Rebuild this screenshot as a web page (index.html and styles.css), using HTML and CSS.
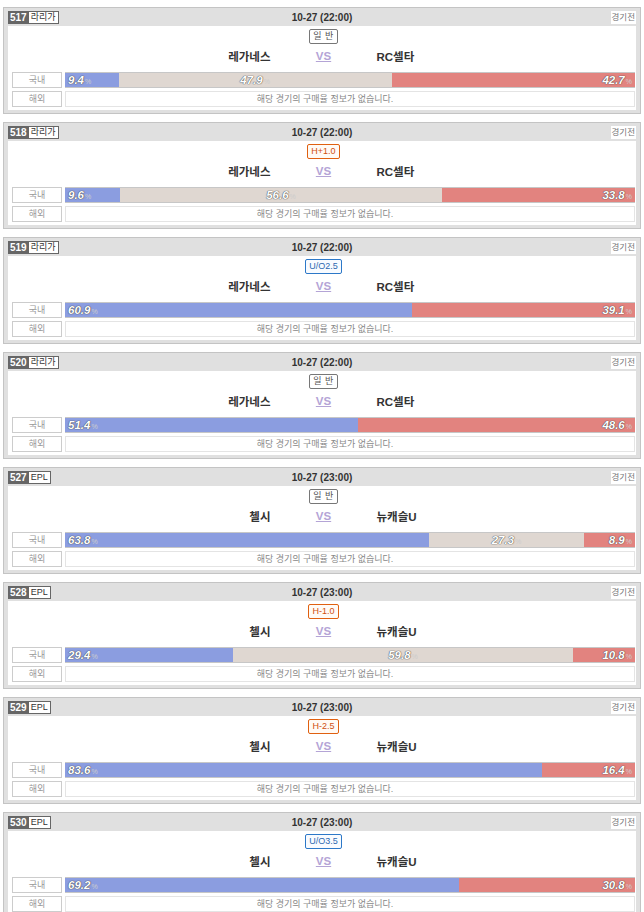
FILE: index.html
```html
<!DOCTYPE html>
<html>
  <head>
    <link rel="stylesheet" href="styles.css">
  </head>
  <body>
    <div class="game">
      <div class="game-head">
        <span class="league"><b>517</b>라리가</span>
        <span class="game-time">10-27 (22:00)</span>
        <span class="game-state">경기전</span>
      </div>
      <div class="game-body">
        <div class="bet-type"><span class="type normal">일 반</span></div>
        <div class="teams"><span class="home">레가네스</span><a class="vs">VS</a><span class="away">RC셀타</span></div>
        <div class="rate-row">
          <span class="rate-label">국내</span>
          <div class="rate-bar">
            <div class="seg win" style="width: 9.4%">9.4<small>%</small></div>
            <div class="seg draw" style="width: 47.9%">47.9<small>%</small></div>
            <div class="seg lose">42.7<small>%</small></div>
          </div>
        </div>
        <div class="rate-row">
          <span class="rate-label">해외</span>
          <div class="rate-empty">해당 경기의 구매율 정보가 없습니다.</div>
        </div>
      </div>
    </div>

    <div class="game">
      <div class="game-head">
        <span class="league"><b>518</b>라리가</span>
        <span class="game-time">10-27 (22:00)</span>
        <span class="game-state">경기전</span>
      </div>
      <div class="game-body">
        <div class="bet-type"><span class="type handi">H+1.0</span></div>
        <div class="teams"><span class="home">레가네스</span><a class="vs">VS</a><span class="away">RC셀타</span></div>
        <div class="rate-row">
          <span class="rate-label">국내</span>
          <div class="rate-bar">
            <div class="seg win" style="width: 9.6%">9.6<small>%</small></div>
            <div class="seg draw" style="width: 56.6%">56.6<small>%</small></div>
            <div class="seg lose">33.8<small>%</small></div>
          </div>
        </div>
        <div class="rate-row">
          <span class="rate-label">해외</span>
          <div class="rate-empty">해당 경기의 구매율 정보가 없습니다.</div>
        </div>
      </div>
    </div>

    <div class="game">
      <div class="game-head">
        <span class="league"><b>519</b>라리가</span>
        <span class="game-time">10-27 (22:00)</span>
        <span class="game-state">경기전</span>
      </div>
      <div class="game-body">
        <div class="bet-type"><span class="type over">U/O2.5</span></div>
        <div class="teams"><span class="home">레가네스</span><a class="vs">VS</a><span class="away">RC셀타</span></div>
        <div class="rate-row">
          <span class="rate-label">국내</span>
          <div class="rate-bar">
            <div class="seg win" style="width: 60.9%">60.9<small>%</small></div>
            <div class="seg lose">39.1<small>%</small></div>
          </div>
        </div>
        <div class="rate-row">
          <span class="rate-label">해외</span>
          <div class="rate-empty">해당 경기의 구매율 정보가 없습니다.</div>
        </div>
      </div>
    </div>

    <div class="game">
      <div class="game-head">
        <span class="league"><b>520</b>라리가</span>
        <span class="game-time">10-27 (22:00)</span>
        <span class="game-state">경기전</span>
      </div>
      <div class="game-body">
        <div class="bet-type"><span class="type normal">일 반</span></div>
        <div class="teams"><span class="home">레가네스</span><a class="vs">VS</a><span class="away">RC셀타</span></div>
        <div class="rate-row">
          <span class="rate-label">국내</span>
          <div class="rate-bar">
            <div class="seg win" style="width: 51.4%">51.4<small>%</small></div>
            <div class="seg lose">48.6<small>%</small></div>
          </div>
        </div>
        <div class="rate-row">
          <span class="rate-label">해외</span>
          <div class="rate-empty">해당 경기의 구매율 정보가 없습니다.</div>
        </div>
      </div>
    </div>

    <div class="game">
      <div class="game-head">
        <span class="league"><b>527</b>EPL</span>
        <span class="game-time">10-27 (23:00)</span>
        <span class="game-state">경기전</span>
      </div>
      <div class="game-body">
        <div class="bet-type"><span class="type normal">일 반</span></div>
        <div class="teams"><span class="home">첼시</span><a class="vs">VS</a><span class="away">뉴캐슬U</span></div>
        <div class="rate-row">
          <span class="rate-label">국내</span>
          <div class="rate-bar">
            <div class="seg win" style="width: 63.8%">63.8<small>%</small></div>
            <div class="seg draw" style="width: 27.3%">27.3<small>%</small></div>
            <div class="seg lose">8.9<small>%</small></div>
          </div>
        </div>
        <div class="rate-row">
          <span class="rate-label">해외</span>
          <div class="rate-empty">해당 경기의 구매율 정보가 없습니다.</div>
        </div>
      </div>
    </div>

    <div class="game">
      <div class="game-head">
        <span class="league"><b>528</b>EPL</span>
        <span class="game-time">10-27 (23:00)</span>
        <span class="game-state">경기전</span>
      </div>
      <div class="game-body">
        <div class="bet-type"><span class="type handi">H-1.0</span></div>
        <div class="teams"><span class="home">첼시</span><a class="vs">VS</a><span class="away">뉴캐슬U</span></div>
        <div class="rate-row">
          <span class="rate-label">국내</span>
          <div class="rate-bar">
            <div class="seg win" style="width: 29.4%">29.4<small>%</small></div>
            <div class="seg draw" style="width: 59.8%">59.8<small>%</small></div>
            <div class="seg lose">10.8<small>%</small></div>
          </div>
        </div>
        <div class="rate-row">
          <span class="rate-label">해외</span>
          <div class="rate-empty">해당 경기의 구매율 정보가 없습니다.</div>
        </div>
      </div>
    </div>

    <div class="game">
      <div class="game-head">
        <span class="league"><b>529</b>EPL</span>
        <span class="game-time">10-27 (23:00)</span>
        <span class="game-state">경기전</span>
      </div>
      <div class="game-body">
        <div class="bet-type"><span class="type handi">H-2.5</span></div>
        <div class="teams"><span class="home">첼시</span><a class="vs">VS</a><span class="away">뉴캐슬U</span></div>
        <div class="rate-row">
          <span class="rate-label">국내</span>
          <div class="rate-bar">
            <div class="seg win" style="width: 83.6%">83.6<small>%</small></div>
            <div class="seg lose">16.4<small>%</small></div>
          </div>
        </div>
        <div class="rate-row">
          <span class="rate-label">해외</span>
          <div class="rate-empty">해당 경기의 구매율 정보가 없습니다.</div>
        </div>
      </div>
    </div>

    <div class="game">
      <div class="game-head">
        <span class="league"><b>530</b>EPL</span>
        <span class="game-time">10-27 (23:00)</span>
        <span class="game-state">경기전</span>
      </div>
      <div class="game-body">
        <div class="bet-type"><span class="type over">U/O3.5</span></div>
        <div class="teams"><span class="home">첼시</span><a class="vs">VS</a><span class="away">뉴캐슬U</span></div>
        <div class="rate-row">
          <span class="rate-label">국내</span>
          <div class="rate-bar">
            <div class="seg win" style="width: 69.2%">69.2<small>%</small></div>
            <div class="seg lose">30.8<small>%</small></div>
          </div>
        </div>
        <div class="rate-row">
          <span class="rate-label">해외</span>
          <div class="rate-empty">해당 경기의 구매율 정보가 없습니다.</div>
        </div>
      </div>
    </div>
  </body>
</html>
```

FILE: styles.css
```css
body {
  margin: 0;
  padding: 7px 3px 0;
  background: #ffffff;
  font-family: "Liberation Sans", "Noto Sans CJK KR", sans-serif;
  font-size: 10px;
  color: #333333;
}

.game {
  border: 1px solid #c4c4c4;
  background-color: #e0e0e0;
  padding: 0 4px 3px;
  margin-bottom: 8px;
}

.game-head {
  height: 18px;
  display: grid;
  grid-template-columns: 1fr auto 1fr;
  align-items: center;
}

.league {
  justify-self: start;
  display: flex;
  height: 13px;
  margin-top: 1px;
  border: 1px solid #666666;
  box-sizing: border-box;
  background: #ffffff;
  line-height: 11px;
  font-size: 9px;
  color: #333333;
  padding-right: 2px;
}

.league b {
  background: #666666;
  color: #ffffff;
  font-size: 10px;
  padding: 0 2px 0 1px;
  margin-right: 2px;
}

.game-time {
  font-weight: bold;
  font-size: 10px;
  color: #333333;
  padding-top: 1px;
}

.game-state {
  justify-self: end;
  margin-top: 1px;
  height: 13px;
  line-height: 13px;
  padding: 0 1px;
  background: #ffffff;
  color: #777777;
  font-size: 8.5px;
}

.game-body {
  background: #ffffff;
  padding: 3px 1px 3px 4px;
}

.bet-type {
  display: flex;
  justify-content: center;
  height: 15px;
}

.type {
  border: 1px solid #777777;
  border-radius: 2px;
  padding: 0 3px;
  line-height: 13px;
  font-size: 9px;
  color: #555555;
  letter-spacing: 0.5px;
}

.type.handi {
  border-color: #e06010;
  color: #d05010;
  background: #fffaf5;
  letter-spacing: 0;
}

.type.over {
  border-color: #2c78c8;
  color: #2c68b0;
  background: #f8fbff;
  letter-spacing: 0;
}

.teams {
  display: grid;
  grid-template-columns: 1fr 106px 1fr;
  align-items: center;
  height: 21px;
  margin-top: 1px;
  margin-bottom: 6px;
  font-size: 11.5px;
  font-weight: bold;
  color: #333333;
}

.home {
  text-align: right;
}

.vs {
  text-align: center;
  color: #b4a4d6;
  text-decoration: underline;
  font-size: 11.5px;
}

.rate-row {
  display: flex;
  gap: 3px;
  height: 16px;
  margin-bottom: 3px;
}

.rate-row:last-child {
  margin-bottom: 0;
}

.rate-label {
  width: 50px;
  flex: none;
  box-sizing: border-box;
  border: 1px solid #cccccc;
  text-align: center;
  line-height: 14px;
  font-size: 9px;
  color: #999999;
}

.rate-bar {
  flex: 1;
  display: flex;
  border-top: 1px solid rgba(0, 0, 0, 0.22);
  border-bottom: 1px solid rgba(0, 0, 0, 0.22);
  box-sizing: border-box;
  overflow: hidden;
}

.seg {
  flex: none;
  box-sizing: border-box;
  line-height: 14px;
  padding: 0 3px;
  font-size: 11.5px;
  font-weight: bold;
  font-style: italic;
  color: #ffffff;
  text-shadow: 0 0 1px #444444, 0 0 1px #444444;
  white-space: nowrap;
}

.seg small {
  font-size: 7px;
  font-style: normal;
  font-weight: normal;
  color: #cccccc;
  text-shadow: none;
  margin-left: 1px;
}

.win {
  background-color: #8b9de0;
  text-align: left;
}

.draw {
  background-color: #dfd7d1;
  text-align: center;
}

.lose {
  flex: 1;
  background-color: #e2837f;
  text-align: right;
}

.rate-empty {
  flex: 1;
  box-sizing: border-box;
  border: 1px solid #e4e4e4;
  padding-right: 50px;
  text-align: center;
  line-height: 14px;
  font-size: 9px;
  color: #888888;
}
```
